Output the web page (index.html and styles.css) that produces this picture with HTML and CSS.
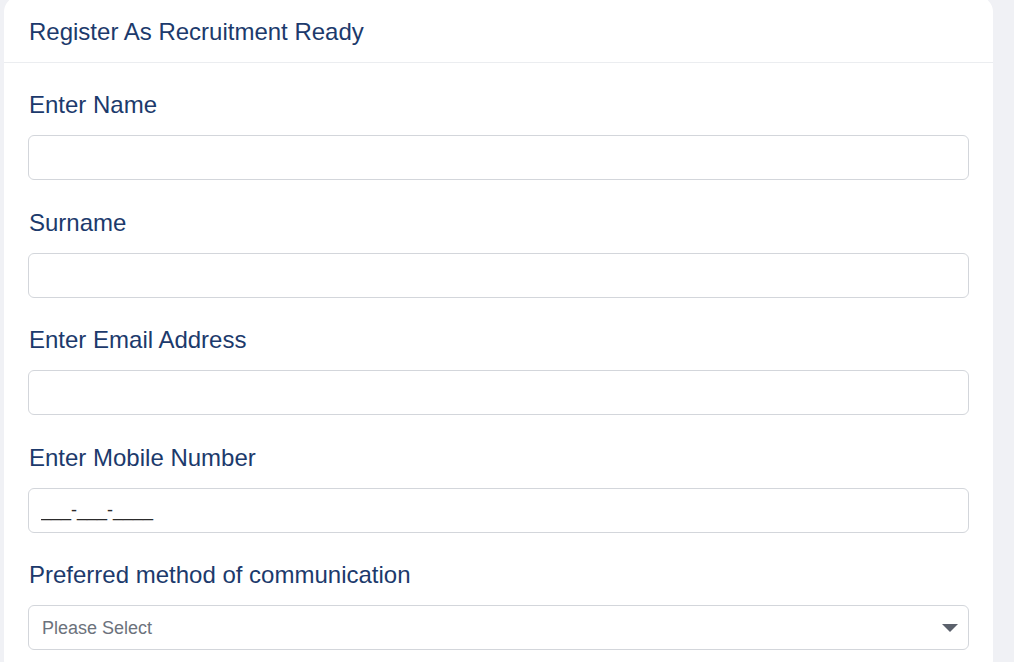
FILE: index.html
```html
<!DOCTYPE html>
<html lang="en">
<head>
  <meta charset="UTF-8">
  <meta name="viewport" content="width=device-width, initial-scale=1.0">
  <title>Register As Recruitment Ready</title>
  <link rel="stylesheet" href="styles.css">
</head>
<body>
  <div class="form-card">
    <div class="form-header">Register As Recruitment Ready</div>
    <form class="form-body">
      <div class="form-group">
        <label class="form-label" for="name">Enter Name</label>
        <input type="text" class="form-input" id="name">
      </div>
      <div class="form-group">
        <label class="form-label" for="surname">Surname</label>
        <input type="text" class="form-input" id="surname">
      </div>
      <div class="form-group">
        <label class="form-label" for="email">Enter Email Address</label>
        <input type="email" class="form-input" id="email">
      </div>
      <div class="form-group">
        <label class="form-label" for="mobile">Enter Mobile Number</label>
        <input type="text" class="form-input mask-input" id="mobile" value="___-___-____">
      </div>
      <div class="form-group">
        <label class="form-label" for="method">Preferred method of communication</label>
        <div class="select-wrap">
          <select class="form-input form-select" id="method">
            <option>Please Select</option>
            <option>Email</option>
            <option>Phone</option>
          </select>
          <span class="select-arrow"></span>
        </div>
      </div>
    </form>
  </div>
</body>
</html>
```

FILE: styles.css
```css
body {
  margin: 0;
  padding: 0;
  background-color: #f0f1f5;
  font-family: "Liberation Sans", Arial, sans-serif;
  overflow: hidden;
}

.form-card {
  margin: -4px 21px 0 4px;
  background-color: #ffffff;
  border-radius: 16px;
  height: 680px;
}

.form-header {
  padding: 19px 25px 14px;
  font-size: 24px;
  line-height: 33px;
  color: #1c3a6c;
  border-bottom: 1px solid #ebedf0;
}

.form-body {
  padding: 25px 24px 0;
}

.form-group {
  margin-bottom: 25.5px;
}

.form-label {
  display: block;
  padding-left: 1px;
  margin-bottom: 14px;
  font-size: 24px;
  line-height: 33px;
  color: #1c3a6c;
}

.form-input {
  display: block;
  box-sizing: border-box;
  width: 100%;
  height: 45px;
  padding: 0 12px;
  border: 1px solid #d3d6db;
  border-radius: 6px;
  background-color: #ffffff;
  font-family: "Liberation Sans", Arial, sans-serif;
  font-size: 18px;
  color: #333333;
  outline: none;
}

.mask-input {
  color: #2b2b2b;
}

.select-wrap {
  position: relative;
}

.form-select {
  appearance: none;
  -webkit-appearance: none;
  color: #6c727c;
  padding-left: 13px;
}

.select-arrow {
  position: absolute;
  right: 11px;
  top: 19px;
  width: 0;
  height: 0;
  border-left: 8px solid transparent;
  border-right: 8px solid transparent;
  border-top: 8px solid #5b616c;
}
```
